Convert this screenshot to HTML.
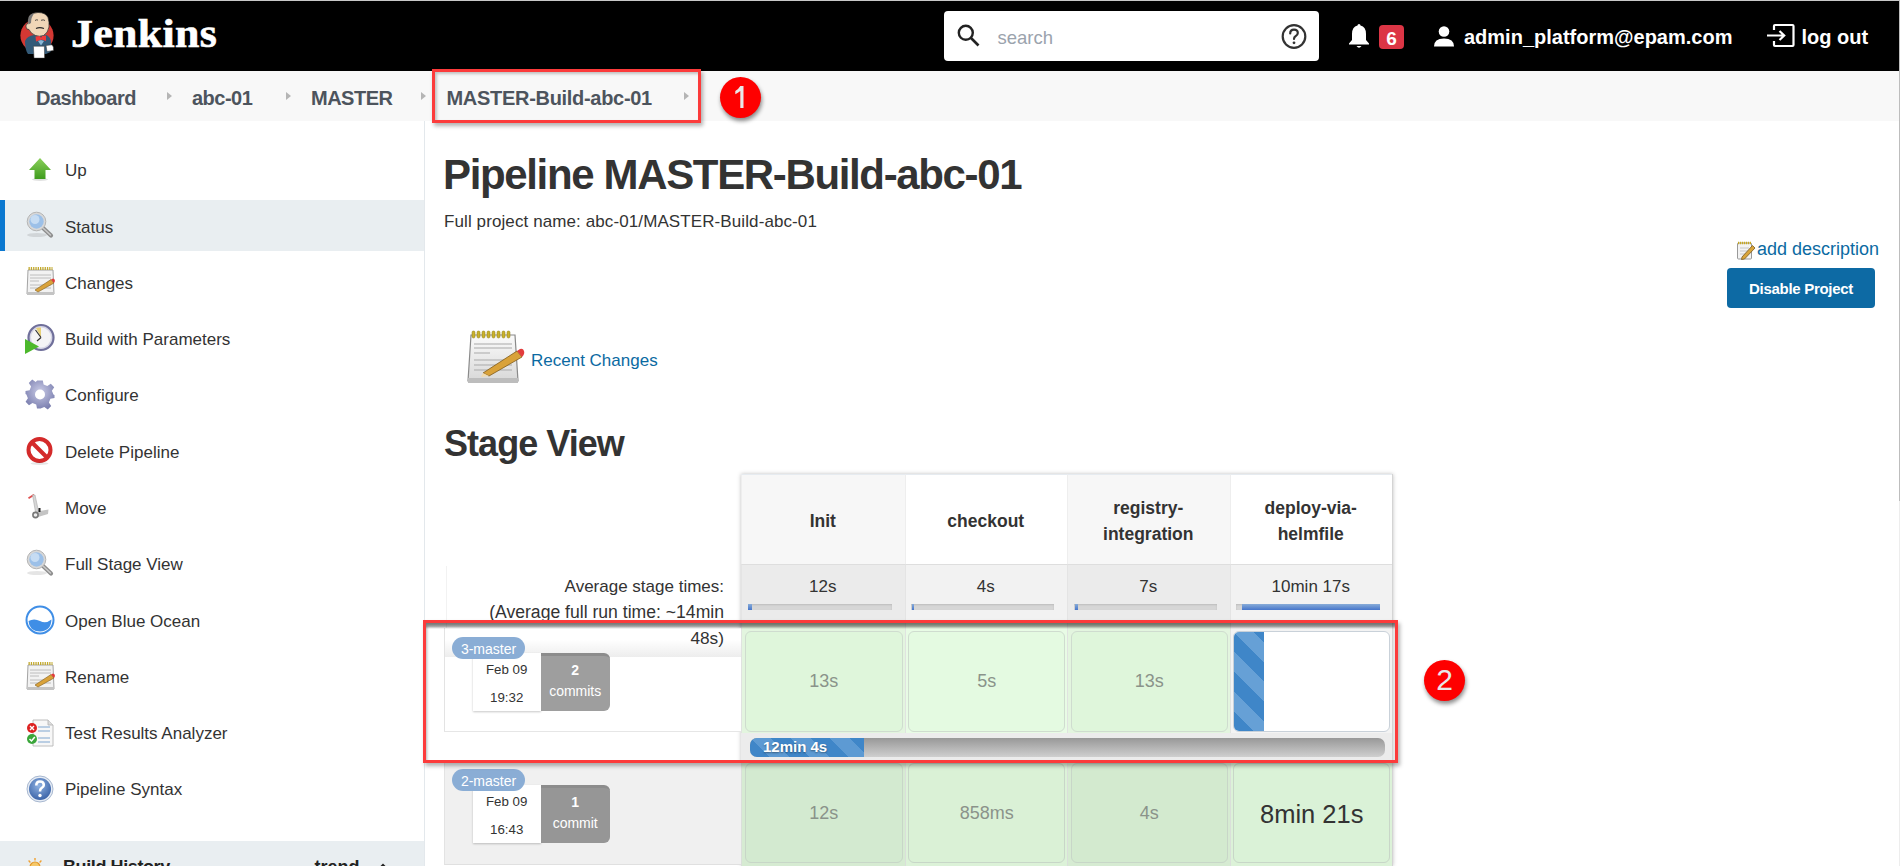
<!DOCTYPE html>
<html><head><meta charset="utf-8">
<style>
*{margin:0;padding:0;box-sizing:border-box}
html,body{width:1900px;height:866px;overflow:hidden;background:#fff;font-family:"Liberation Sans",sans-serif;color:#333}
.a{position:absolute}
.t{position:absolute;line-height:1;white-space:nowrap}
#hdr{left:0;top:0;width:1900px;height:71px;background:#000;border-top:1px solid #c8c8c8}
#bc{left:0;top:71px;width:1900px;height:50px;background:#f8f8f8}
.bct{font-weight:bold;font-size:20px;color:#4d545d;letter-spacing:-0.5px}
.chev{width:0;height:0;border-top:4.5px solid transparent;border-bottom:4.5px solid transparent;border-left:5px solid #b5b5b5}
#side{left:0;top:121px;width:425px;height:745px;border-right:1px solid #e3e8ec;background:#fff}
.st{font-size:17px;color:#333;left:65px}
</style></head><body>
<!-- header -->
<div id="hdr" class="a"></div>
<div id="bc" class="a"></div>

<!-- logo -->
<svg class="a" style="left:15px;top:8px" width="50" height="56" viewBox="0 0 50 56">
  <circle cx="22" cy="27.5" r="16.6" fill="#d33833"/>
  <path d="M10 33 Q12 28 19 27 L30 26.5 Q35 28 36 33 L35.5 44 L31 46 L13 46 Q10 42 10 33Z" fill="#335a78"/>
  <path d="M14 8.5 Q16.5 4.5 23 4.5 Q30.5 4.5 33 9.5 Q34.5 14 34 19 Q33 25 28.5 27.5 Q24.5 29 20.5 27.5 Q15.5 25.5 14 21.5 Q11.5 22 11 19 Q10.5 15.5 13 15.5 Q13 11.5 14 8.5Z" fill="#f0d6b7" stroke="#2b2b2b" stroke-width="0.7"/>
  <path d="M14 8.5 Q16 5.5 19.5 5 Q16 9 16 15 L13.5 16.5 Q12.5 12 14 8.5Z" fill="#767676"/>
  <path d="M20 12.5 Q21.5 11.3 23 12.1 M26 12.3 Q28.5 11.3 30 12.5" stroke="#2b2b2b" stroke-width="0.8" fill="none"/>
  <path d="M21 20.5 Q24.5 18.8 29 20.5" stroke="#2b2b2b" stroke-width="1.1" fill="none"/>
  <path d="M20.5 28.5 L25 28 L26 30 L27 28 L31 27.5 L31 33 L26.5 31.5 L25.5 32 L21 33.5Z" fill="#ef3a3a"/>
  <path d="M23 33 L26 37.5 L29 33 L26 32Z" fill="#8ab8d8"/>
  <path d="M18.4 38.2 L29.4 38.2 L29.6 50.1 L19 50.1Z" fill="#fff" stroke="#333" stroke-width="0.5"/>
  <path d="M31 37.5 L37 36.8 Q39 38.5 38.5 42.5 L32 43.5Z" fill="#fff" stroke="#333" stroke-width="0.5"/>
</svg>
<div class="t" style="left:70.5px;top:14.1px;font-family:'Liberation Serif',serif;font-weight:bold;font-size:39px;letter-spacing:0.3px;color:#fff;-webkit-text-stroke:0.6px #fff;transform:scaleX(1.125);transform-origin:0 0">Jenkins</div>

<!-- search -->
<div class="a" style="left:944px;top:11px;width:375px;height:50px;background:#fff;border-radius:4px"></div>
<svg class="a" style="left:954px;top:21px" width="30" height="30" viewBox="0 0 30 30">
  <circle cx="11.8" cy="11.8" r="7" stroke="#222" stroke-width="2.4" fill="none"/>
  <path d="M17 17 L24.5 24.5" stroke="#222" stroke-width="2.6"/>
</svg>
<div class="t" style="left:997.5px;top:29px;font-size:18.5px;color:#9ba3ad">search</div>
<svg class="a" style="left:1279px;top:22px" width="30" height="30" viewBox="0 0 30 30">
  <circle cx="15" cy="14.5" r="11.3" stroke="#333" stroke-width="2.2" fill="none"/>
  <path d="M11.2 11.5 Q11.2 7.6 15 7.6 Q18.8 7.6 18.8 11 Q18.8 13 16.5 14.2 Q15 15 15 17" stroke="#333" stroke-width="2.2" fill="none" stroke-linecap="round"/>
  <circle cx="15" cy="20.8" r="1.4" fill="#333"/>
</svg>
<!-- bell -->
<svg class="a" style="left:1346px;top:22px" width="26" height="28" viewBox="0 0 26 28">
  <path d="M13 2 Q14.5 2 14.5 3.6 Q20 5 20 12 L20 18 L23 21.5 L23 22.5 L3 22.5 L3 21.5 L6 18 L6 12 Q6 5 11.5 3.6 Q11.5 2 13 2Z" fill="#fff"/>
  <path d="M10.5 24 Q13 27.5 15.5 24Z" fill="#fff"/>
</svg>
<div class="a" style="left:1379px;top:24.5px;width:25px;height:24.5px;background:#dc3545;border-radius:4px"></div>
<div class="t" style="left:1379px;width:25px;text-align:center;top:29px;font-size:19px;font-weight:bold;color:#fff">6</div>
<!-- user -->
<svg class="a" style="left:1432px;top:25px" width="24" height="23" viewBox="0 0 24 23">
  <circle cx="12" cy="6.5" r="5.3" fill="#fff"/>
  <path d="M2 21.5 Q2 13.5 12 13.5 Q22 13.5 22 21.5Z" fill="#fff"/>
</svg>
<div class="t" style="left:1464px;top:27.3px;font-size:20px;font-weight:bold;color:#fff">admin_platform@epam.com</div>
<!-- logout -->
<svg class="a" style="left:1765px;top:23px" width="32" height="26" viewBox="0 0 32 26">
  <path d="M9 7 L9 3 Q9 2 10 2 L27.5 2 Q28.5 2 28.5 3 L28.5 22 Q28.5 23 27.5 23 L10 23 Q9 23 9 22 L9 18" stroke="#fff" stroke-width="2.2" fill="none"/>
  <path d="M2 12.5 L19 12.5 M14.5 8 L19.2 12.5 L14.5 17" stroke="#fff" stroke-width="2.2" fill="none"/>
</svg>
<div class="t" style="left:1801.5px;top:27.3px;font-size:20px;font-weight:bold;color:#fff">log out</div>



<!-- breadcrumb -->
<div class="t bct" style="left:36px;top:88.1px">Dashboard</div>
<div class="a chev" style="left:167px;top:92px"></div>
<div class="t bct" style="left:192px;top:88.1px">abc-01</div>
<div class="a chev" style="left:286px;top:92px"></div>
<div class="t bct" style="left:311px;top:88.1px">MASTER</div>
<div class="a chev" style="left:421px;top:92px"></div>
<div class="t bct" style="left:446.5px;top:88.1px;letter-spacing:-0.3px">MASTER-Build-abc-01</div>
<div class="a chev" style="left:684px;top:92px"></div>

<!-- sidebar -->
<div id="side" class="a"></div>
<div class="a" style="left:0;top:200px;width:424px;height:50.5px;background:#e9eef1"></div>
<div class="a" style="left:0;top:200px;width:5px;height:51px;background:#0b78d0"></div>

<div class="t st" style="top:162.3px">Up</div>
<div class="t st" style="top:218.6px">Status</div>
<div class="t st" style="top:274.8px">Changes</div>
<div class="t st" style="top:331.1px">Build with Parameters</div>
<div class="t st" style="top:387.4px">Configure</div>
<div class="t st" style="top:443.6px">Delete Pipeline</div>
<div class="t st" style="top:499.9px">Move</div>
<div class="t st" style="top:556.2px">Full Stage View</div>
<div class="t st" style="top:612.5px">Open Blue Ocean</div>
<div class="t st" style="top:668.7px">Rename</div>
<div class="t st" style="top:725px">Test Results Analyzer</div>
<div class="t st" style="top:781.3px">Pipeline Syntax</div>

<div class="a" style="left:0;top:841px;width:424px;height:25px;background:#e9eef1"></div>

<!-- sidebar icons -->
<svg class="a" style="left:24px;top:152px" width="32" height="32" viewBox="0 0 32 32">
  <defs><linearGradient id="gu" x1="0" y1="0" x2="0" y2="1"><stop offset="0" stop-color="#8ad05a"/><stop offset="1" stop-color="#3f9b1e"/></linearGradient></defs>
  <ellipse cx="16" cy="27.5" rx="8" ry="1.5" fill="rgba(0,0,0,0.12)"/>
  <path d="M16 6 L27 18 L21.5 18 L21.5 27 L10.5 27 L10.5 18 L5 18Z" fill="url(#gu)"/>
</svg>
<svg class="a" style="left:22px;top:206px" width="34" height="34" viewBox="0 0 34 34">
  <ellipse cx="15" cy="29" rx="10" ry="2" fill="rgba(0,0,0,0.10)"/>
  <path d="M20.5 21.5 L29 29.5" stroke="#8d8d8d" stroke-width="4.2" stroke-linecap="round"/>
  <path d="M21 22 L28.5 29" stroke="#c9c9c9" stroke-width="1.6" stroke-linecap="round"/>
  <circle cx="14.5" cy="15.5" r="9.3" fill="#d8d8d8" stroke="#b5b5b5" stroke-width="1"/>
  <circle cx="14.5" cy="15.5" r="7.2" fill="#9cc0e8"/>
  <circle cx="13" cy="13.5" r="4.5" fill="#c6dcf3"/>
</svg>
<svg class="a" style="left:24px;top:265px" width="32" height="32" viewBox="0 0 32 32">
  <path d="M4 5 L29 5 L30 29 L3 29Z" fill="#f2f2f2" stroke="#9a9a9a" stroke-width="0.9"/>
  <rect x="3" y="27" width="27" height="3" fill="#c4c4c4"/>
  <path d="M4.5 3.5 H28.5" stroke="#c2a92e" stroke-width="3" stroke-dasharray="1.3 1"/>
  <path d="M6 10 H27 M6 13 H27 M6 16 H15 M6 20 H27 M6 23 H27" stroke="#b0b0b0" stroke-width="0.8"/>
  <path d="M11 25 L27 14.5 L30 18 L14 27Z" fill="#d9a23a" stroke="#805c1c" stroke-width="0.6"/>
  <path d="M27 14.5 L29 13.5 Q31 13.5 31 16 L30 18Z" fill="#e23c3c"/>
</svg>
<svg class="a" style="left:23px;top:322px" width="34" height="34" viewBox="0 0 34 34">
  <circle cx="18" cy="15.5" r="12.5" fill="#d6d6e6" stroke="#6f6f9a" stroke-width="2.2"/>
  <circle cx="18" cy="15.5" r="10" fill="#f4f4f6"/>
  <path d="M18 15.5 L13 6 A10 10 0 0 1 18 5.5Z" fill="#e8d27a"/>
  <path d="M18 15.5 L12.5 8 M18 15.5 L14 19" stroke="#333" stroke-width="1.2"/>
  <path d="M2 17 L16 24.5 L2 32Z" fill="#4cb82c"/>
</svg>
<svg class="a" style="left:24px;top:379px" width="32" height="32" viewBox="0 0 32 32">
  <defs><radialGradient id="gg" cx="0.5" cy="0.4" r="0.6"><stop offset="0" stop-color="#c9cbe6"/><stop offset="1" stop-color="#7c80b0"/></radialGradient></defs>
  <path d="M13.2 2.5 H18.8 L19.6 6.6 L23.3 8.1 L26.8 5.8 L30.2 9.2 L27.9 12.7 L29.4 16.4 L30.5 17 L30.5 20 L26.4 20.8 L24.9 24.5 L27.2 28 L23.8 31.4 L20.3 29.1 L16.6 30.6 L15.8 30.5 L13 30.5 L12.2 26.4 L8.5 24.9 L5 27.2 L1.6 23.8 L3.9 20.3 L2.4 16.6 L1.5 16 L1.5 13 L5.6 12.2 L7.1 8.5 L4.8 5 L8.2 1.6 L11.7 3.9 Z" fill="url(#gg)" transform="translate(0,-1)"/>
  <circle cx="16" cy="15.5" r="5" fill="#fff"/>
</svg>
<svg class="a" style="left:25px;top:436px" width="30" height="30" viewBox="0 0 30 30">
  <circle cx="14.5" cy="14" r="11" fill="#fff" stroke="#d42a2a" stroke-width="4"/>
  <path d="M7 6.5 L22 21.5" stroke="#d42a2a" stroke-width="4"/>
  <ellipse cx="14.5" cy="27.5" rx="9" ry="1.5" fill="rgba(0,0,0,0.10)"/>
</svg>
<svg class="a" style="left:25px;top:492px" width="30" height="30" viewBox="0 0 30 30">
  <path d="M3 5.5 L8.5 2 L9.5 3.5 L4 7Z" fill="#e05050"/>
  <path d="M7.5 3 L10 3 L13.5 19 L10.5 20Z" fill="#d6d6d6" stroke="#aaa" stroke-width="0.6"/>
  <path d="M12 19.5 L23.5 17.5 L23 22 L13 25Z" fill="#c4c4c4"/>
  <rect x="13.5" y="16" width="2" height="4" fill="#222"/>
  <circle cx="10.5" cy="23" r="3.4" fill="#777"/>
  <circle cx="10.5" cy="23" r="1.8" fill="#eee"/>
</svg>
<svg class="a" style="left:22px;top:544px" width="34" height="34" viewBox="0 0 34 34">
  <ellipse cx="15" cy="29" rx="10" ry="2" fill="rgba(0,0,0,0.10)"/>
  <path d="M20.5 21.5 L29 29.5" stroke="#8d8d8d" stroke-width="4.2" stroke-linecap="round"/>
  <path d="M21 22 L28.5 29" stroke="#c9c9c9" stroke-width="1.6" stroke-linecap="round"/>
  <circle cx="14.5" cy="15.5" r="9.3" fill="#d8d8d8" stroke="#b5b5b5" stroke-width="1"/>
  <circle cx="14.5" cy="15.5" r="7.2" fill="#9cc0e8"/>
  <circle cx="13" cy="13.5" r="4.5" fill="#c6dcf3"/>
</svg>
<svg class="a" style="left:24px;top:604px" width="32" height="32" viewBox="0 0 32 32">
  <circle cx="16" cy="16" r="13.5" fill="#fff" stroke="#3f8ee6" stroke-width="2"/>
  <path d="M4.5 17 Q10 14 16 17 Q22 20 27.5 15.5 Q27 27 16 27.5 Q5 27 4.5 17Z" fill="#3f8ee6"/>
</svg>
<svg class="a" style="left:24px;top:660px" width="32" height="32" viewBox="0 0 32 32">
  <path d="M4 5 L29 5 L30 29 L3 29Z" fill="#f2f2f2" stroke="#9a9a9a" stroke-width="0.9"/>
  <rect x="3" y="27" width="27" height="3" fill="#c4c4c4"/>
  <path d="M4.5 3.5 H28.5" stroke="#c2a92e" stroke-width="3" stroke-dasharray="1.3 1"/>
  <path d="M6 10 H27 M6 13 H27 M6 16 H15 M6 20 H27 M6 23 H27" stroke="#b0b0b0" stroke-width="0.8"/>
  <path d="M11 25 L27 14.5 L30 18 L14 27Z" fill="#d9a23a" stroke="#805c1c" stroke-width="0.6"/>
  <path d="M27 14.5 L29 13.5 Q31 13.5 31 16 L30 18Z" fill="#e23c3c"/>
</svg>
<svg class="a" style="left:24px;top:716px" width="32" height="32" viewBox="0 0 32 32">
  <path d="M9 4 L24 4 L29 9 L29 30 L9 30Z" fill="#f7f7f7" stroke="#b7b7b7" stroke-width="0.9"/>
  <path d="M24 4 L24 9 L29 9" fill="#ddd" stroke="#b7b7b7" stroke-width="0.9"/>
  <path d="M14 11 H26 M14 15 H26 M14 22 H26 M14 26 H26" stroke="#7fa6cf" stroke-width="1.2"/>
  <circle cx="8" cy="12" r="5" fill="#d22"/>
  <path d="M6 10 L10 14 M10 10 L6 14" stroke="#fff" stroke-width="1.4"/>
  <circle cx="8" cy="23" r="5" fill="#3aa63a"/>
  <path d="M5.5 23 L7.5 25 L10.8 21" stroke="#fff" stroke-width="1.5" fill="none"/>
</svg>
<svg class="a" style="left:24px;top:773px" width="32" height="32" viewBox="0 0 32 32">
  <defs><radialGradient id="gq" cx="0.45" cy="0.35" r="0.65"><stop offset="0" stop-color="#8fb2e2"/><stop offset="1" stop-color="#3c64a8"/></radialGradient></defs>
  <circle cx="16" cy="16" r="13" fill="#e6ecf5" stroke="#a8b8d0" stroke-width="1"/>
  <circle cx="16" cy="16" r="11" fill="url(#gq)"/>
  <path d="M12.3 12.5 Q12.3 8.5 16 8.5 Q19.8 8.5 19.8 12 Q19.8 14 17.5 15.2 Q16 16 16 18.5" stroke="#fff" stroke-width="2.6" fill="none"/>
  <circle cx="16" cy="22.5" r="1.7" fill="#fff"/>
</svg>
<!-- build history -->
<svg class="a" style="left:25px;top:857px" width="20" height="20" viewBox="0 0 20 20">
  <circle cx="10" cy="10" r="5" fill="#f5c86a" stroke="#e59a2a" stroke-width="1.2"/>
  <path d="M10 1 V3.5 M10 16.5 V19 M1 10 H3.5 M16.5 10 H19 M3.6 3.6 L5.4 5.4 M14.6 14.6 L16.4 16.4 M3.6 16.4 L5.4 14.6 M14.6 5.4 L16.4 3.6" stroke="#f0a030" stroke-width="1.4"/>
</svg>
<div class="t" style="left:63px;top:857.5px;font-size:18px;font-weight:bold;color:#222;letter-spacing:-0.4px">Build History</div>
<div class="t" style="left:314.5px;top:857.5px;font-size:18px;font-weight:bold;color:#222">trend</div>
<svg class="a" style="left:376px;top:861px" width="14" height="10" viewBox="0 0 14 10"><path d="M3 8 L7 4 L11 8" stroke="#222" stroke-width="2" fill="none"/></svg>



<!-- annotation 1 -->
<div class="a" style="left:432px;top:69px;width:269px;height:54px;border:3px solid #fc3b3b;box-shadow:2px 3px 4px rgba(0,0,0,0.3), inset 2px 2px 3px rgba(0,0,0,0.22)"></div>
<div class="a" style="left:720px;top:77px;width:41px;height:41px;border-radius:50%;background:#fe0000;box-shadow:1px 3px 4px rgba(0,0,0,0.45)"></div>
<svg class="a" style="left:720px;top:77px" width="41" height="41" viewBox="0 0 41 41"><path d="M20.3 9 L23.5 9 L23.5 31 L20.3 31 L20.3 14 Q18 16 15.3 17.3 L15.3 14 Q18.5 12.2 20.3 9Z" fill="#e8e8e8"/></svg>

<!-- title -->
<div class="t" style="left:443px;top:154.3px;font-size:42px;font-weight:bold;letter-spacing:-1.35px;color:#333">Pipeline MASTER-Build-abc-01</div>
<div class="t" style="left:444px;top:212.9px;font-size:17px;color:#333;letter-spacing:0.1px">Full project name: abc-01/MASTER-Build-abc-01</div>

<!-- add description -->
<svg class="a" style="left:1736px;top:240px" width="20" height="20" viewBox="0 0 20 20">
  <rect x="1.5" y="3" width="14" height="16" rx="1" fill="#f3f3f3" stroke="#999" stroke-width="1"/>
  <path d="M2 3 L15 3" stroke="#c8a820" stroke-width="2.5" stroke-dasharray="1.2 0.8"/>
  <path d="M4 8 H13 M4 11 H13 M4 14 H10" stroke="#bbb" stroke-width="0.8"/>
  <path d="M6 17 L16.5 5.5 L19 8 L8.5 19 L5.5 19.5Z" fill="#d9a43a" stroke="#7a5a20" stroke-width="0.8"/>
</svg>
<div class="t" style="left:1757px;top:239.8px;font-size:18px;color:#0b6aa2">add description</div>
<div class="a" style="left:1727px;top:268px;width:148px;height:40px;background:#0d6aa4;border-radius:4px"></div>
<div class="t" style="left:1727px;width:148px;text-align:center;top:281.3px;font-size:15px;font-weight:bold;color:#fff;letter-spacing:-0.3px">Disable Project</div>

<!-- recent changes -->
<svg class="a" style="left:466px;top:329px" width="62" height="58" viewBox="0 0 62 58">
  <defs><linearGradient id="pg" x1="0" y1="0" x2="0" y2="1"><stop offset="0" stop-color="#fbfbfb"/><stop offset="1" stop-color="#d8d8d8"/></linearGradient></defs>
  <path d="M5 6 L49 6 L52 52 L2 52Z" fill="url(#pg)" stroke="#8a8a8a" stroke-width="1.2"/>
  <rect x="2" y="49" width="50" height="5" fill="#bdbdbd"/>
  <g fill="#c9b22e" stroke="#8c7a12" stroke-width="0.5"><rect x="6" y="2" width="3" height="7" rx="1.4"/><rect x="11" y="2" width="3" height="7" rx="1.4"/><rect x="16" y="2" width="3" height="7" rx="1.4"/><rect x="21" y="2" width="3" height="7" rx="1.4"/><rect x="26" y="2" width="3" height="7" rx="1.4"/><rect x="31" y="2" width="3" height="7" rx="1.4"/><rect x="36" y="2" width="3" height="7" rx="1.4"/><rect x="41" y="2" width="3" height="7" rx="1.4"/></g>
  <path d="M8 15 H46 M8 19 H46 M8 24 H24 M8 31 H46 M8 36 H46 M8 41 H46" stroke="#a9a9a9" stroke-width="1"/>
  <path d="M17 44 L51 22 L56 28 L23 47 Z" fill="#d9a23a" stroke="#805c1c" stroke-width="0.8"/>
  <path d="M51 22 L54 20 Q57 19 58 22 Q59 25 56 28Z" fill="#e23c3c"/>
  <path d="M17 44 L23 47 L15 48Z" fill="#f2dcae"/>
</svg>
<div class="t" style="left:531px;top:352.4px;font-size:17px;color:#0b6aa2">Recent Changes</div>

<!-- stage view title -->
<div class="t" style="left:444px;top:426.3px;font-size:36px;font-weight:bold;letter-spacing:-0.95px;color:#333">Stage View</div>

<!-- stage view -->
<div class="a" style="left:741px;top:474px;width:652px;height:392px;box-shadow:0 0 4px rgba(0,0,0,0.25)"></div>
<div class="a" style="left:741px;top:474px;width:163.5px;height:89.5px;background:#f7f7f7;border-left:1px solid #eee;border-top:1px solid #e6ebf0"></div>
<div class="a" style="left:741px;top:563.5px;width:163.5px;height:57.5px;background:#ebebeb;border-left:1px solid #e4e4e4;border-top:1px solid #dedede"></div>
<div class="t" style="left:741px;width:163.5px;text-align:center;top:513.2px;font-size:17.5px;font-weight:bold;color:#333">Init</div>
<div class="t" style="left:741px;width:163.5px;text-align:center;top:578.3px;font-size:17px;color:#333">12s</div>
<div class="a" style="left:748.2px;top:604px;width:143.5px;height:6px;background:#d6d6d6;box-shadow:inset 0 1px 2px rgba(0,0,0,0.12)"></div>
<div class="a" style="left:748.2px;top:604px;width:3.5px;height:6px;background:linear-gradient(#88acd8,#4676cb)"></div>
<div class="a" style="left:904.5px;top:474px;width:162.5px;height:89.5px;background:#fff;border-left:1px solid #eee;border-top:1px solid #e6ebf0"></div>
<div class="a" style="left:904.5px;top:563.5px;width:162.5px;height:57.5px;background:#f2f2f2;border-left:1px solid #e4e4e4;border-top:1px solid #dedede"></div>
<div class="t" style="left:904.5px;width:162.5px;text-align:center;top:513.2px;font-size:17.5px;font-weight:bold;color:#333">checkout</div>
<div class="t" style="left:904.5px;width:162.5px;text-align:center;top:578.3px;font-size:17px;color:#333">4s</div>
<div class="a" style="left:910.5px;top:604px;width:143.5px;height:6px;background:#d6d6d6;box-shadow:inset 0 1px 2px rgba(0,0,0,0.12)"></div>
<div class="a" style="left:911.5px;top:604px;width:2px;height:6px;background:linear-gradient(#88acd8,#4676cb)"></div>
<div class="a" style="left:1067px;top:474px;width:162.5px;height:89.5px;background:#f7f7f7;border-left:1px solid #eee;border-top:1px solid #e6ebf0"></div>
<div class="a" style="left:1067px;top:563.5px;width:162.5px;height:57.5px;background:#ebebeb;border-left:1px solid #e4e4e4;border-top:1px solid #dedede"></div>
<div class="t" style="left:1067px;width:162.5px;text-align:center;top:500.4px;font-size:17.5px;font-weight:bold;color:#333">registry-</div>
<div class="t" style="left:1067px;width:162.5px;text-align:center;top:525.9px;font-size:17.5px;font-weight:bold;color:#333">integration</div>
<div class="t" style="left:1067px;width:162.5px;text-align:center;top:578.3px;font-size:17px;color:#333">7s</div>
<div class="a" style="left:1073.5px;top:604px;width:143.5px;height:6px;background:#d6d6d6;box-shadow:inset 0 1px 2px rgba(0,0,0,0.12)"></div>
<div class="a" style="left:1075px;top:604px;width:2.5px;height:6px;background:linear-gradient(#88acd8,#4676cb)"></div>
<div class="a" style="left:1229.5px;top:474px;width:162.5px;height:89.5px;background:#fff;border-left:1px solid #eee;border-top:1px solid #e6ebf0"></div>
<div class="a" style="left:1229.5px;top:563.5px;width:162.5px;height:57.5px;background:#f2f2f2;border-left:1px solid #e4e4e4;border-top:1px solid #dedede"></div>
<div class="t" style="left:1229.5px;width:162.5px;text-align:center;top:500.4px;font-size:17.5px;font-weight:bold;color:#333">deploy-via-</div>
<div class="t" style="left:1229.5px;width:162.5px;text-align:center;top:525.9px;font-size:17.5px;font-weight:bold;color:#333">helmfile</div>
<div class="t" style="left:1229.5px;width:162.5px;text-align:center;top:578.3px;font-size:17px;color:#333">10min 17s</div>
<div class="a" style="left:1236px;top:604px;width:144px;height:6px;background:#d6d6d6;box-shadow:inset 0 1px 2px rgba(0,0,0,0.12)"></div>
<div class="a" style="left:1242px;top:604px;width:138px;height:6px;background:linear-gradient(#88acd8,#4676cb)"></div>
<!-- rows -->
<div class="a" style="left:446px;top:566px;width:1px;height:62px;background:#f2f2f2"></div>
<div class="t" style="left:444px;width:280px;text-align:right;top:578.3px;font-size:17px;color:#333">Average stage times:</div>
<div class="t" style="left:444px;width:280px;text-align:right;top:604.1px;font-size:17.6px;color:#333">(Average full run time: ~14min</div>
<div class="t" style="left:444px;width:280px;text-align:right;top:630.1px;font-size:17.3px;color:#333">48s)</div>
<div class="a" style="left:443.5px;top:628px;width:297.5px;height:29px;background:linear-gradient(#fff 40%,#ededed);border-left:1px solid #e3e3e3"></div>
<div class="a" style="left:443.5px;top:657px;width:297.5px;height:75px;background:#fff;border-left:1px solid #e3e3e3;border-bottom:1px solid #e6e6e6"></div>
<div class="t" style="left:444px;width:280px;text-align:right;top:630.1px;font-size:17.3px;color:#333">48s)</div>
<div class="a" style="left:472.7px;top:653.4px;width:68px;height:57.2px;background:#fff;box-shadow:0 1px 2px rgba(0,0,0,0.22)"></div>
<div class="t" style="left:472.7px;width:68px;text-align:center;top:662.5px;font-size:13.3px;color:#333">Feb 09</div>
<div class="t" style="left:472.7px;width:68px;text-align:center;top:690.5px;font-size:13.3px;color:#333">19:32</div>
<div class="a" style="left:540.7px;top:653.4px;width:69px;height:57.2px;background:#9e9e9e;border-radius:0 6px 6px 0;border-top:3px solid #8c8c8c"></div>
<div class="t" style="left:540.7px;width:69px;text-align:center;top:663.3px;font-size:14px;font-weight:bold;color:#fff">2</div>
<div class="t" style="left:540.7px;width:69px;text-align:center;top:683.8px;font-size:14px;color:#fff">commits</div>
<div class="a" style="left:452px;top:637px;width:73px;height:22px;border-radius:11px;background:#8aadd5"></div>
<div class="t" style="left:452px;width:73px;text-align:center;top:641.6px;font-size:14px;color:#fff">3-master</div>
<div class="a" style="left:741px;top:621px;width:163.5px;height:112px;background:#e3f5df;border-left:1px solid #e0e3e0"></div>
<div class="a" style="left:745px;top:631px;width:157.5px;height:100.7px;background:#dff6db;border:1px solid #cfdccf;border-radius:6px;overflow:hidden"></div>
<div class="t" style="left:745px;width:157.5px;text-align:center;top:671.8px;font-size:18px;color:#8a938a">13s</div>
<div class="a" style="left:904.5px;top:621px;width:162.5px;height:112px;background:#e8fbe5;border-left:1px solid #e0e3e0"></div>
<div class="a" style="left:907.5px;top:631px;width:157px;height:100.7px;background:#e4fae1;border:1px solid #cfdccf;border-radius:6px;overflow:hidden"></div>
<div class="t" style="left:908.5px;width:156.5px;text-align:center;top:671.8px;font-size:18px;color:#8a938a">5s</div>
<div class="a" style="left:1067px;top:621px;width:162.5px;height:112px;background:#e3f5df;border-left:1px solid #e0e3e0"></div>
<div class="a" style="left:1071px;top:631px;width:156.5px;height:100.7px;background:#dff6db;border:1px solid #cfdccf;border-radius:6px;overflow:hidden"></div>
<div class="t" style="left:1071px;width:156.5px;text-align:center;top:671.8px;font-size:18px;color:#8a938a">13s</div>
<div class="a" style="left:1229.5px;top:621px;width:162.5px;height:112px;background:#f3f3f3;border-left:1px solid #e0e3e0"></div>
<div class="a" style="left:1232.8px;top:631px;width:157.2px;height:100.7px;background:#fff;border:1px solid #c9d1d9;border-radius:6px;overflow:hidden"><div style="position:absolute;left:0;top:0;width:30px;height:100%;background:repeating-linear-gradient(45deg,#3f86c8 0 14px,#66a0d6 14px 28px)"></div></div>
<div class="a" style="left:741px;top:733px;width:651px;height:30px;background:#ececec"></div>
<div class="a" style="left:750px;top:738px;width:635px;height:19px;border-radius:7px;background:linear-gradient(#989898,#cfcfcf);overflow:hidden"><div style="position:absolute;left:0;top:0;width:114px;height:19px;background:repeating-linear-gradient(45deg,#3f86c8 0 14px,#5d9ad3 14px 28px)"></div></div>
<div class="t" style="left:763px;top:739.3px;font-size:15px;font-weight:bold;color:#fff;text-shadow:0 1px 2px rgba(0,0,0,0.4)">12min 4s</div>
<div class="a" style="left:443.5px;top:763px;width:297.5px;height:102px;background:#f0f0f0;border-left:1px solid #e3e3e3;border-bottom:1px solid #e0e0e0"></div>
<div class="a" style="left:472.7px;top:785.4px;width:68px;height:57.2px;background:#fff;box-shadow:0 1px 2px rgba(0,0,0,0.22)"></div>
<div class="t" style="left:472.7px;width:68px;text-align:center;top:794.5px;font-size:13.3px;color:#333">Feb 09</div>
<div class="t" style="left:472.7px;width:68px;text-align:center;top:822.5px;font-size:13.3px;color:#333">16:43</div>
<div class="a" style="left:540.7px;top:785.4px;width:69px;height:57.2px;background:#969696;border-radius:0 6px 6px 0;border-top:3px solid #8c8c8c"></div>
<div class="t" style="left:540.7px;width:69px;text-align:center;top:795.3px;font-size:14px;font-weight:bold;color:#fff">1</div>
<div class="t" style="left:540.7px;width:69px;text-align:center;top:815.8px;font-size:14px;color:#fff">commit</div>
<div class="a" style="left:452px;top:769px;width:73px;height:22px;border-radius:11px;background:#8aadd5"></div>
<div class="t" style="left:452px;width:73px;text-align:center;top:773.6px;font-size:14px;color:#fff">2-master</div>
<div class="a" style="left:741px;top:763px;width:163.5px;height:103px;background:#d6ebd2;border-left:1px solid #dadfda"></div>
<div class="a" style="left:745px;top:763px;width:157.5px;height:100px;background:#d3ead0;border:1px solid #c8d6c8;border-radius:6px"></div>
<div class="t" style="left:745px;width:157.5px;text-align:center;top:803.8px;font-size:18px;color:#8a938a">12s</div>
<div class="a" style="left:904.5px;top:763px;width:162.5px;height:103px;background:#dcf2d8;border-left:1px solid #dadfda"></div>
<div class="a" style="left:907.5px;top:763px;width:157px;height:100px;background:#daf1d6;border:1px solid #c8d6c8;border-radius:6px"></div>
<div class="t" style="left:908.5px;width:156.5px;text-align:center;top:803.8px;font-size:18px;color:#8a938a">858ms</div>
<div class="a" style="left:1067px;top:763px;width:162.5px;height:103px;background:#d6ebd2;border-left:1px solid #dadfda"></div>
<div class="a" style="left:1071px;top:763px;width:156.5px;height:100px;background:#d3eacf;border:1px solid #c8d6c8;border-radius:6px"></div>
<div class="t" style="left:1071px;width:156.5px;text-align:center;top:803.8px;font-size:18px;color:#8a938a">4s</div>
<div class="a" style="left:1229.5px;top:763px;width:162.5px;height:103px;background:#dcf2d8;border-left:1px solid #dadfda"></div>
<div class="a" style="left:1232.8px;top:763px;width:157.2px;height:100px;background:#daf2d7;border:1px solid #c8d6c8;border-radius:6px"></div>
<div class="t" style="left:1233.5px;width:156.5px;text-align:center;top:801.5px;font-size:25.5px;color:#333">8min 21s</div>
<div class="a" style="left:1391.5px;top:474px;width:1.5px;height:392px;background:#d4d4d4"></div>
<div class="a" style="left:426px;top:623px;width:969px;height:6px;background:linear-gradient(rgba(0,0,0,0.33),rgba(0,0,0,0.25) 60%,rgba(0,0,0,0))"></div>
<div class="a" style="left:423px;top:620px;width:975px;height:143px;border:3px solid #fc3b3b;box-shadow:2px 3px 4px rgba(0,0,0,0.3), inset 1px 3px 3px rgba(0,0,0,0.3)"></div>
<div class="a" style="left:1424px;top:659.7px;width:41px;height:41px;border-radius:50%;background:#fe0000;box-shadow:1px 3px 4px rgba(0,0,0,0.45)"></div>
<div class="t" style="left:1424px;width:41px;text-align:center;top:665.2px;font-size:30px;color:#e8e8e8">2</div>
<div class="a" style="left:1899px;top:0;width:1px;height:501px;background:#bdbdbd"></div>
<div class="a" style="left:1899px;top:501px;width:1px;height:365px;background:#ededed"></div>
</body></html>
